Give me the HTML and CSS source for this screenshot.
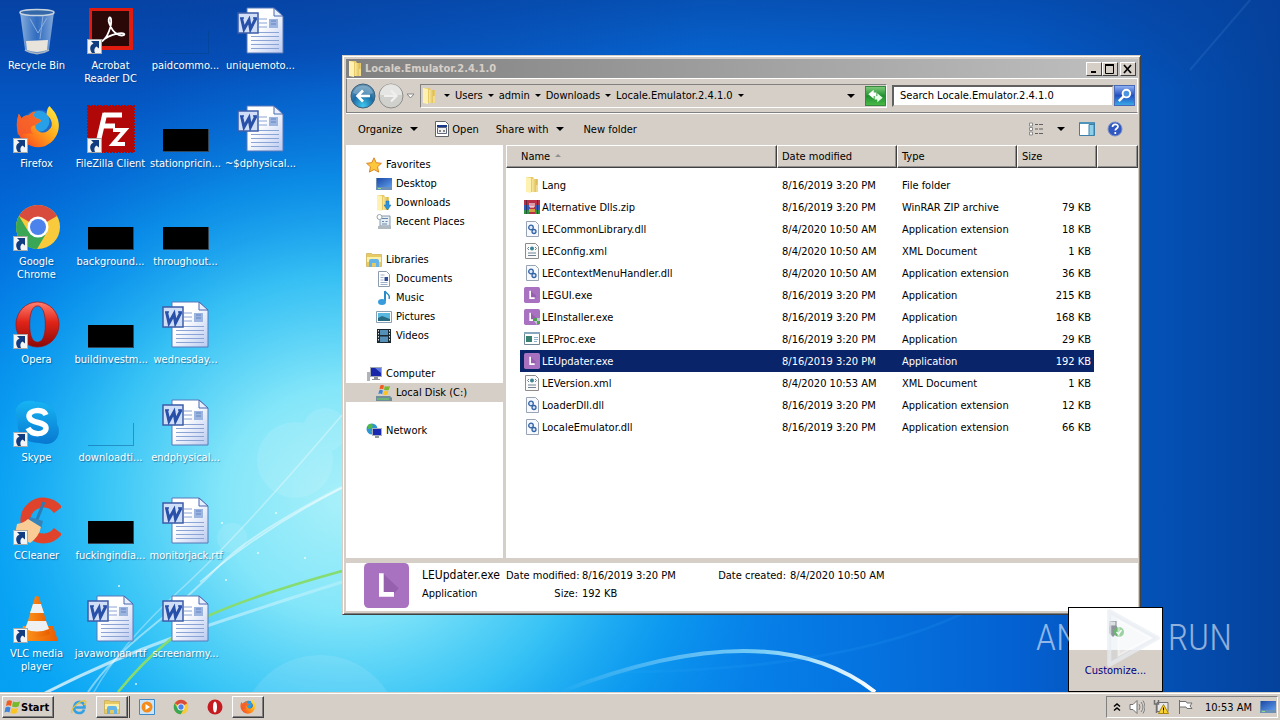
FILE: index.html
```html
<!DOCTYPE html>
<html lang="en">
<head>
<meta charset="utf-8">
<title>Desktop</title>
<link rel="stylesheet" href="styles.css">
</head>
<body>
<svg class="defs" aria-hidden="true">
  <defs>
    <linearGradient id="gPaper" x1="0" y1="0" x2="1" y2="1"><stop offset="0.4" stop-color="#fff"/><stop offset="1" stop-color="#b9c9f0"/></linearGradient>
    <linearGradient id="gFolder" x1="0" y1="0" x2="1" y2="0"><stop offset="0" stop-color="#f8e9a0"/><stop offset="1" stop-color="#dcb850"/></linearGradient>
    <linearGradient id="gFox" x1="1" y1="0" x2="0" y2="1"><stop offset="0" stop-color="#fff24a"/><stop offset="0.4" stop-color="#ffb21e"/><stop offset="0.75" stop-color="#ff6a1c"/><stop offset="1" stop-color="#e8203c"/></linearGradient>
    <linearGradient id="gOpera" x1="0" y1="0" x2="0" y2="1"><stop offset="0" stop-color="#ff8070"/><stop offset="0.45" stop-color="#e02418"/><stop offset="1" stop-color="#8c0808"/></linearGradient>
    <linearGradient id="gSkype" x1="0" y1="0" x2="0" y2="1"><stop offset="0" stop-color="#16b4f4"/><stop offset="1" stop-color="#0878d0"/></linearGradient>
    <linearGradient id="gCone" x1="0" y1="0" x2="1" y2="0"><stop offset="0" stop-color="#ff9a20"/><stop offset="1" stop-color="#e85c00"/></linearGradient>
    <linearGradient id="gBin" x1="0" y1="0" x2="1" y2="0"><stop offset="0" stop-color="#a4c4e8" stop-opacity=".85"/><stop offset="0.5" stop-color="#4c84cc" stop-opacity=".6"/><stop offset="1" stop-color="#9cbce4" stop-opacity=".85"/></linearGradient>
    <linearGradient id="gScreen" x1="0" y1="0" x2="1" y2="1"><stop offset="0" stop-color="#1c48a8"/><stop offset="1" stop-color="#5c9ce8"/></linearGradient>
    <radialGradient id="gBack" cx=".5" cy=".9" r=".9"><stop offset="0" stop-color="#40c8f0"/><stop offset="0.5" stop-color="#1c6ca4"/><stop offset="1" stop-color="#6898b8"/></radialGradient>
  </defs>
  <symbol id="arrow" viewBox="0 0 15 15"><rect x=".5" y=".5" width="14" height="14" fill="#f4f4f4" stroke="#a8a8a8"/><path d="M4 2h8v7.500L9.500 7.500C7 9 7 11.500 8 14H5C2 10 3 6 6.500 4.500z" fill="#123c80"/></symbol>
  <symbol id="word" viewBox="0 0 48 48">
    <path d="M10 1h27l9 8v37H10z" fill="url(#gPaper)" stroke="#5878b8"/><path d="M37 1v8h9z" fill="#e8f0ff" stroke="#4868b0"/>
    <path d="M22 12h8M22 16h8M22 20h8M14 25.500h28M14 29.500h28M14 33.500h28M14 37.500h28M14 41.500h28" stroke="#8ca4d4"/>
    <rect x="32" y="12" width="9" height="9" fill="#9cb4e0"/><path d="M34 14h5M34 17h5" stroke="#6484c0"/>
    <rect x="1" y="6" width="20" height="20" fill="#d0def8" stroke="#3c5ca8" stroke-width="1.500"/>
    <path d="M4.500 11l2.500 11 5-9 1.500 9L19 11" fill="none" stroke="#2850a8" stroke-width="3"/><path d="M3 11h4M16 11h4" stroke="#2850a8" stroke-width="1.500"/>
  </symbol>
  <symbol id="firefox" viewBox="0 0 48 48">
    <circle cx="25" cy="23" r="18" fill="#2468c8"/><circle cx="25" cy="17" r="11" fill="#28a0e8"/>
    <path d="M4 9l3 5c2-3 5-3 7-3 2-2 4-4 7-4-2 3-2 5 1 7 3 0 5 1 5 3l-6 4c0 6 7 10 13 6 7-4 5-12-1-17 0-4 1-7 3-9 3 4 6 6 8 12 5 12-1 25-13 30C19 47 6 40 3 28 1 21 2 15 4 9z" fill="url(#gFox)"/>
    <path d="M4 9l3 5c2-3 5-3 7-3 2-2 4-4 7-4-2 3-2 5 1 7 3 0 5 1 5 3l-6 4c-5 0-6 5-2 9-6-1-11 1-16 1C1 21 2 15 4 9z" fill="#f45a2c" opacity=".85"/>
  </symbol>
  <symbol id="chrome" viewBox="0 0 48 48">
    <circle cx="24" cy="24" r="22" fill="#f8ca3c"/><path d="M24 24L5 13A22 22 0 0 1 43 13z" fill="#d84c3e"/><path d="M5 13A22 22 0 0 0 23 46L33 29 24 24 14 28z" fill="#3aa757"/>
    <circle cx="24" cy="24" r="10.500" fill="#fff"/><circle cx="24" cy="24" r="8" fill="#4c82ec"/>
  </symbol>
  <symbol id="opera" viewBox="0 0 48 48"><path fill-rule="evenodd" d="M24 1a22 23 0 0 0 0 46 22 23 0 0 0 0-46zM24 5c5 0 8 7 8 19s-3 18-8 18-8-6-8-18 3-19 8-19z" fill="url(#gOpera)" stroke="#a01010" stroke-width=".7"/></symbol>
  <symbol id="folder" viewBox="0 0 16 16"><path d="M2 0h7l1 2h4v13H2z" fill="#e8ca68"/><path d="M2 0l5 1v15l-5-1z" fill="#fff2b0"/><path d="M8 2h5v13H8z" fill="url(#gFolder)"/><path d="M12 8h2v7h-2z" fill="#f0dc8c"/></symbol>
  <symbol id="le" viewBox="0 0 48 48"><rect width="48" height="48" rx="5" fill="#a972c0"/><path d="M20 11l17 16L31 34 20 31z" fill="#9760ae"/><path d="M16 11h5v20h11v5H16z" fill="#fff"/></symbol>
  <symbol id="dll" viewBox="0 0 16 16"><path d="M2.500.5h9l3 3v12h-12z" fill="#f6fafe" stroke="#98a4b4"/><circle cx="7" cy="6.500" r="2.300" fill="#dce8f8" stroke="#3464a4" stroke-width="1.300"/><circle cx="10" cy="10.500" r="2" fill="#dce8f8" stroke="#3464a4" stroke-width="1.300"/></symbol>
  <symbol id="xml" viewBox="0 0 16 16"><path d="M1.500.5h10l3 3v12h-13z" fill="#fafafa" stroke="#8c8c8c"/><circle cx="8" cy="5.500" r="2" fill="#3c8494"/><path d="M5 4L3.500 5.500 5 7M11 4l1.500 1.500L11 7M4 10h8M4 12.500h8" fill="none" stroke="#708090"/></symbol>
  <symbol id="winlogo" viewBox="0 0 16 16"><path d="M3 2c2-1 3-1 5 0L7 7C5 6 4 6 2 7z" fill="#f05c24"/><path d="M9 2.500c2 1 4 1 7 0l-1.500 5c-2 1-4 1-6.500 0z" fill="#78b82c"/><path d="M1.500 8.500c2-1 3-1 5 0l-1 5c-2-1-3-1-5 0z" fill="#3c84dc"/><path d="M7.500 9c2 1 4 1 6.500 0l-1.500 5c-2 1-4 1-6 0z" fill="#fcc420"/></symbol>
  <symbol id="lib" viewBox="0 0 16 16"><path d="M.5 1.500h5l1 1h9v12H.5z" fill="#e8ca64" stroke="#c8a440" stroke-width=".6"/><path d="M1 5h14v5H1z" fill="#fdf0a8"/><path d="M3 15V9q0-2 2-2h6q2 0 2 2v6h-3v-4H6v4z" fill="#64b4e8"/></symbol>
  <symbol id="monitor" viewBox="0 0 16 16"><path d="M0 2h16v12H0z" fill="#6c90b8"/><path d="M1 2h15v9H1z" fill="url(#gScreen)"/><path d="M2 12.500h3" stroke="#8cdc8c"/></symbol>
</svg>

<main class="desktop">
  <svg class="wallpaper" viewBox="0 0 1280 692" preserveAspectRatio="none" aria-hidden="true">
    <defs>
      <linearGradient id="w1" x1="0" y1="0" x2="0" y2="1"><stop offset="0" stop-color="#0646b0"/><stop offset=".4" stop-color="#0070e0"/><stop offset=".7" stop-color="#009cf4"/><stop offset="1" stop-color="#00a8f8"/></linearGradient>
      <linearGradient id="w2" x1="0" y1="0" x2="1" y2="0"><stop offset=".1" stop-color="#0860cc" stop-opacity="0"/><stop offset=".55" stop-color="#0878e8" stop-opacity=".75"/><stop offset=".8" stop-color="#0460d0"/><stop offset="1" stop-color="#04429c"/></linearGradient>
      <radialGradient id="w3" gradientUnits="userSpaceOnUse" cx="0" cy="0" r="1" gradientTransform="translate(345 500) scale(490 450)"><stop offset="0" stop-color="#a8f0fa"/><stop offset=".25" stop-color="#84e6f9"/><stop offset=".5" stop-color="#3cc8f6" stop-opacity=".9"/><stop offset=".72" stop-color="#10a4f2" stop-opacity=".6"/><stop offset="1" stop-color="#0878e0" stop-opacity="0"/></radialGradient>
      <linearGradient id="w4" x1="0" y1="0" x2="1" y2="0"><stop offset="0" stop-color="#fff" stop-opacity="0"/><stop offset=".6" stop-color="#9ce8fc" stop-opacity=".7"/><stop offset="1" stop-color="#fff"/></linearGradient>
      <linearGradient id="w5" x1="0" y1="0" x2="0" y2="1"><stop offset="0" stop-color="#06409c"/><stop offset="1" stop-color="#06409c" stop-opacity="0"/></linearGradient>
      <linearGradient id="w6" x1="0" y1="0" x2="1" y2="0"><stop offset="0" stop-color="#fff"/><stop offset="1" stop-color="#fff" stop-opacity=".3"/></linearGradient>
    </defs>
    <path d="M0 0h1280v692H0z" fill="url(#w1)"/><path d="M0 0h1280v692H0z" fill="url(#w2)"/><path d="M0 0h1280v692H0z" fill="url(#w3)"/>
    <path d="M0 0h1280v90H0z" fill="url(#w5)" opacity=".6"/>
    <g fill="#fff" opacity=".1"><circle cx="295" cy="460" r="38"/><circle cx="325" cy="430" r="22"/><circle cx="232" cy="538" r="15"/><circle cx="320" cy="735" r="80"/></g>
    <g fill="none">
      <path d="M45 693Q110 660 172 638T342 582" stroke="url(#w6)" stroke-width="3" opacity=".75"/>
      <path d="M88 692Q110 660 150 628T220 565T342 487" stroke="#fff" stroke-width="2" opacity=".45"/>
      <path d="M94 692Q120 645 180 590T342 415" stroke="#fff" stroke-width="1.500" opacity=".35"/>
      <path d="M200 582Q260 530 342 488" stroke="#fff" stroke-width="1.500" opacity=".5"/>
      <path d="M118 692Q165 635 210 615T342 571" stroke="#86dc70" stroke-width="2.500"/>
      <path d="M560 692Q770 610 875 692" stroke="url(#w4)" stroke-width="4"/>
      <path d="M970 610Q850 670 620 672" stroke="#30a8f8" stroke-width="3" opacity=".15"/>
      <path d="M1190 70L1250 0" stroke="#4c8cd8" stroke-width="2" opacity=".2"/>
    </g>
    <g fill="#fff" opacity=".8"><circle cx="222" cy="523" r="1"/><circle cx="276" cy="513" r="1"/><circle cx="226" cy="580" r="1"/><circle cx="258" cy="553" r="1"/><circle cx="305" cy="558" r="1"/><circle cx="136" cy="684" r="1"/><circle cx="119" cy="586" r="1"/></g>
  </svg>

  <section class="icons" aria-label="Desktop icons">
    <button class="shortcut"><svg class="pic" viewBox="0 0 48 48"><path d="M7 5l5 38q12 6 24 0l5-38z" fill="url(#gBin)"/><path d="M13 34l22-1-1 10q-10 4-20 0z" fill="#e8e4dc"/><path d="M17 12l8 14 9-15M30 8l-3 24" stroke="#88acdc" fill="none"/><ellipse cx="24" cy="5.500" rx="17" ry="3" fill="#3468a8" stroke="#c8d4e0" stroke-width="1.500"/><path d="M12 43q12 7 24 0" stroke="#a8b4c0" stroke-width="2" fill="none"/></svg><span>Recycle Bin</span></button>
    <button class="shortcut"><svg class="pic" viewBox="0 0 48 48"><use href="#firefox" width="46" height="46" x="2"/><use href="#arrow" x="0" y="33" width="15" height="15"/></svg><span>Firefox</span></button>
    <button class="shortcut"><svg class="pic" viewBox="0 0 48 48"><use href="#chrome" width="48" height="48" x="1" y="0"/><use href="#arrow" x="0" y="33" width="15" height="15"/></svg><span>Google Chrome</span></button>
    <button class="shortcut"><svg class="pic" viewBox="0 0 48 48"><use href="#opera" width="47" height="47" x="1"/><use href="#arrow" x="0" y="33" width="15" height="15"/></svg><span>Opera</span></button>
    <button class="shortcut"><svg class="pic" viewBox="0 0 48 48"><path d="M14 2q5-1 9 1c16 0 22 12 21 22 5 8 0 20-11 20-3 0-5-1-7-1C11 44 3 34 5 23-1 13 4 3 14 2z" fill="url(#gSkype)"/><path d="M33 16c-3-7-17-5-17 1 0 8 17 5 17 12 0 7-14 8-18 0" fill="none" stroke="#fff" stroke-width="5.500"/><use href="#arrow" x="0" y="33" width="15" height="15"/></svg><span>Skype</span></button>
    <button class="shortcut"><svg class="pic" viewBox="0 0 48 48"><path d="M45 13A18 18 0 1 0 45 34" fill="none" stroke="#e0432c" stroke-width="10"/><path d="M31 5L23 25" stroke="#287cb8" stroke-width="3"/><path d="M17 20l13 4-2 8-13-5z" fill="#3484bc"/><path d="M4 27q7-1 11-5l13 8q-2 10-11 16L2 37z" fill="#f8cc94"/><use href="#arrow" x="0" y="33" width="15" height="15"/></svg><span>CCleaner</span></button>
    <button class="shortcut"><svg class="pic" viewBox="0 0 48 48"><path d="M10 31h30l5 15H7z" fill="url(#gCone)"/><path d="M22 2q2-2 4 0l11 37q-13 6-26 0z" fill="url(#gCone)"/><path d="M20 9h8l3 9H17zM15 26h18l3 8q-12 5-24 0z" fill="#eef0f2"/><use href="#arrow" x="0" y="33" width="15" height="15"/></svg><span>VLC media player</span></button>

    <button class="shortcut"><svg class="pic" viewBox="0 0 48 48"><rect x="2" y="1" width="44" height="42" fill="#e01c10"/><rect x="5" y="4" width="37" height="35" fill="#2a0808"/><path d="M14 35C21 31 25 18 24 12c-1-4-4 0-1 6 3 8 10 12 14 10 3-3-13-3-23 7z" fill="none" stroke="#fff" stroke-width="1.800"/><use href="#arrow" x="0" y="32" width="15" height="15"/></svg><span>Acrobat Reader DC</span></button>
    <button class="shortcut"><svg class="pic" viewBox="0 0 48 48"><rect x="1" y="1" width="46" height="46" fill="#b00808" stroke="#b00808" stroke-width="2" stroke-dasharray="2 1"/><path d="M17 10h18M14 21h14M18 8l-7 30" stroke="#fff" stroke-width="5" fill="none"/><path d="M26 25h12L26 39h12" stroke="#fff" stroke-width="4" fill="none"/><use href="#arrow" x="0" y="33" width="15" height="15"/></svg><span>FileZilla Client</span></button>
    <button class="shortcut"><i class="thumb"></i><span>background...</span></button>
    <button class="shortcut"><i class="thumb"></i><span>buildinvestm...</span></button>
    <button class="shortcut"><i class="thumb clear"></i><span>downloadti...</span></button>
    <button class="shortcut"><i class="thumb"></i><span>fuckingindia...</span></button>
    <button class="shortcut"><svg class="pic"><use href="#word"/></svg><span>javawoman.rtf</span></button>

    <button class="shortcut"><i class="thumb clear"></i><span>paidcommo...</span></button>
    <button class="shortcut"><i class="thumb"></i><span>stationpricin...</span></button>
    <button class="shortcut"><i class="thumb"></i><span>throughout...</span></button>
    <button class="shortcut"><svg class="pic"><use href="#word"/></svg><span>wednesday...</span></button>
    <button class="shortcut"><svg class="pic"><use href="#word"/></svg><span>endphysical...</span></button>
    <button class="shortcut"><svg class="pic"><use href="#word"/></svg><span>monitorjack.rtf</span></button>
    <button class="shortcut"><svg class="pic"><use href="#word"/></svg><span>screenarmy...</span></button>

    <button class="shortcut"><svg class="pic"><use href="#word"/></svg><span>uniquemoto...</span></button>
    <button class="shortcut"><svg class="pic"><use href="#word"/></svg><span>~$dphysical...</span></button>
  </section>

  <section class="window" aria-label="Locale.Emulator.2.4.1.0">
    <header class="titlebar">
      <svg class="i16"><use href="#folder"/></svg>
      <h1>Locale.Emulator.2.4.1.0</h1>
      <button class="ctl" aria-label="Minimize"><svg viewBox="0 0 12 10"><path d="M3 8h5" stroke="#000" stroke-width="2"/></svg></button>
      <button class="ctl" aria-label="Maximize"><svg viewBox="0 0 12 10"><path d="M1.500 1v8.500h8V1M1 1h9" fill="none" stroke="#000"/><path d="M1 1h9" stroke="#000" stroke-width="2"/></svg></button>
      <button class="ctl last" aria-label="Close"><svg viewBox="0 0 12 10"><path d="M2 1l7 8M9 1L2 9" stroke="#000" stroke-width="1.700"/></svg></button>
    </header>

    <nav class="navbar">
      <button class="round" aria-label="Back"><svg viewBox="0 0 26 26"><circle cx="13" cy="13" r="12" fill="url(#gBack)" stroke="#406078"/><path d="M3 10a10.500 10.500 0 0 1 20 0q-10 5-20 0z" fill="#fff" opacity=".25"/><path d="M20 13H8M13 7.500L7.500 13l5.500 5.500" fill="none" stroke="#fff" stroke-width="2.600"/></svg></button>
      <button class="round" aria-label="Forward"><svg viewBox="0 0 26 26"><circle cx="13" cy="13" r="12" fill="#d0d0cc" stroke="#8c8c88"/><path d="M2 12a11 11 0 0 1 22 0z" fill="#eee" opacity=".7"/><path d="M6 13h12M13 7.500l5.500 5.500-5.500 5.500" fill="none" stroke="#f0f0f0" stroke-width="2.200"/></svg></button>
      <button class="history" aria-label="Recent pages"><svg viewBox="0 0 9 6"><path d="M1 1h7L4.500 5z" fill="#fff" stroke="#888"/></svg></button>
      <div class="address">
        <svg class="i16"><use href="#folder"/></svg>
        <div class="crumbs">
          <i class="caret s"></i><a href="#">Users</a><i class="caret s"></i><a href="#">admin</a><i class="caret s"></i><a href="#">Downloads</a><i class="caret s"></i><a href="#">Locale.Emulator.2.4.1.0</a><i class="caret s"></i>
        </div>
        <button class="plain drop" aria-label="Previous locations"><i class="caret"></i></button>
        <button class="refresh" aria-label="Refresh"><svg viewBox="0 0 20 20"><path d="M8 3L2 8l6 5v-3h3V6H8z" fill="#fff"/><path d="M12 17l6-5-6-5v3H9v4h3z" fill="#e8ffe8"/></svg></button>
      </div>
      <input class="search" type="text" aria-label="Search" value="Search Locale.Emulator.2.4.1.0">
      <button class="go" aria-label="Start search"><svg viewBox="0 0 20 20"><circle cx="12" cy="8" r="4" fill="#4c94e0" stroke="#fff" stroke-width="2"/><path d="M9 11l-5 5" stroke="#fff" stroke-width="2.500"/></svg></button>
    </nav>

    <div class="toolbar">
      <button class="plain organize">Organize<i class="caret"></i></button>
      <button class="plain open"><svg class="i16" viewBox="0 0 16 16"><path d="M1.500.5h10l3 3v12h-13z" fill="#fff" stroke="#606468"/><path d="M3 4h10v2H3z" fill="#18388c"/><path d="M3.500 6.500h9v6h-9z" fill="#f0f0f0" stroke="#606880"/><path d="M5 10h2M9 10h2" stroke="#222"/></svg>Open</button>
      <button class="plain share">Share with<i class="caret"></i></button>
      <button class="plain">New folder</button>
      <span class="grow"></span>
      <button class="plain view" aria-label="Change your view"><svg class="i16" viewBox="0 0 16 16"><path d="M1.500 2h3v3h-3zM1.500 6.500h3v3h-3zM1.500 11h3v3h-3z" fill="#fff" stroke="#8c8c8c"/><path d="M7 3.500h3M11 3.500h4M7 8h3M11 8h4M7 12.500h3M11 12.500h4" stroke="#606060"/></svg><i class="caret"></i></button>
      <button class="plain pane" aria-label="Show the preview pane"><svg class="i16" viewBox="0 0 16 16"><path d="M.5 1.500h15v13H.5z" fill="#fff" stroke="#3c80a8"/><path d="M1 1h14v2H1z" fill="#4c94b8"/><path d="M10 3.500h5v11h-5z" fill="#8cd0ec" stroke="#3c80a8"/></svg></button>
      <button class="plain" aria-label="Help"><svg class="i16" viewBox="0 0 16 16"><circle cx="8" cy="8" r="7" fill="#3058c0" stroke="#7890c8"/><path d="M5.500 6c0-3.500 5.500-3.500 5.500-.5C11 7.500 8.300 7.500 8.300 9.500M8.300 11v2" fill="none" stroke="#fff" stroke-width="1.700"/></svg></button>
    </div>

    <div class="body">
      <ul class="tree">
        <li><svg class="i16" viewBox="0 0 16 16"><path d="M8 .8l2.200 4.900 5.200.6-3.900 3.500 1.100 5.300L8 12.500l-4.600 2.600 1.100-5.300L.6 6.300l5.200-.6z" fill="#fcc83c" stroke="#dc8420"/></svg>Favorites</li>
        <li class="sub"><svg class="i16"><use href="#monitor"/></svg>Desktop</li>
        <li class="sub"><svg class="i16" viewBox="0 0 16 16"><use href="#folder" width="16" height="16" x="-1"/><path d="M10 6h3v4h2l-3.500 5L8 10h2z" fill="#2c94dc" stroke="#1468a8" stroke-width=".5"/></svg>Downloads</li>
        <li class="sub"><svg class="i16" viewBox="0 0 16 16"><path d="M4 2h10v10H4z" fill="#e4ecf4" stroke="#8898a8"/><path d="M6 4.500h6M6 7.500h2M9.500 7.500h2M6 10h5" stroke="#6888a8"/><path d="M2 12h13v3H2z" fill="#b0b8c0"/><circle cx="3.500" cy="3" r="2.500" fill="#fff" stroke="#98a4ac"/></svg>Recent Places</li>
        <li class="gap"><svg class="i16"><use href="#lib"/></svg>Libraries</li>
        <li class="sub"><svg class="i16" viewBox="0 0 16 16"><path d="M2.500.5h8l3 3v12h-11z" fill="#fff" stroke="#8c9cac"/><path d="M4.500 4h4M4.500 6.500h3M4.500 9h3M4.500 11.500h7M4.500 13.500h7" stroke="#a0b0c8"/><path d="M8.500 6h3.500v4H8.500z" fill="#304c94"/></svg>Documents</li>
        <li class="sub"><svg class="i16" viewBox="0 0 16 16"><path d="M9 1v10" stroke="#2c8cc8" stroke-width="2"/><path d="M9 1c1 3 6 3 4 8" fill="none" stroke="#2c8cc8" stroke-width="1.500"/><ellipse cx="6" cy="12" rx="4" ry="3" fill="#389cdc"/></svg>Music</li>
        <li class="sub"><svg class="i16" viewBox="0 0 16 16"><path d="M.5 2.500h15v11H.5z" fill="#fff" stroke="#88a0b0"/><path d="M2 4h12v8H2z" fill="#58b8e0"/><path d="M2 9l4-2 8 3v2H2z" fill="#286c84"/></svg>Pictures</li>
        <li class="sub"><svg class="i16" viewBox="0 0 16 16"><path d="M1 1h14v14H1z" fill="#1c2830"/><path d="M4 2h8v5H4zM4 8.500h8V14H4z" fill="#5490b8"/><path d="M2.500 2v12M13.500 2v12" stroke="#ddd" stroke-dasharray="1.500 1.500"/></svg>Videos</li>
        <li class="gap"><svg class="i16" viewBox="0 0 16 16"><path d="M1 6h3v9H1z" fill="#b0b4b8"/><path d="M4 1h12v10H4z" fill="#a0a8b4"/><path d="M5 2h10v8H5z" fill="#1828a8"/><path d="M9 2h6v5z" fill="#5c78e0"/><path d="M8 11h4v2H8zM6 13h8v1H6z" fill="#909498"/></svg>Computer</li>
        <li class="sub current"><svg class="i16" viewBox="0 0 16 16"><path d="M0 11h14l2 2v3H0z" fill="#708c98"/><path d="M1 14h12" stroke="#6cdc5c"/><use href="#winlogo" width="12" height="12" x="2" y="-1"/></svg>Local Disk (C:)</li>
        <li class="gap"><svg class="i16" viewBox="0 0 16 16"><circle cx="6" cy="6" r="5.500" fill="#2c94d8"/><path d="M2 2q4-3 5 1-1 3-5 3zM4 8h4v3z" fill="#50b84c"/><path d="M6 5h10v8H6z" fill="#a8b0c0"/><path d="M7 6h8v6H7z" fill="#1828b0"/><path d="M9 13h4v2H9z" fill="#90989c"/></svg>Network</li>
      </ul>
      <div class="list">
        <table>
          <colgroup><col class="c-name"><col class="c-date"><col class="c-type"><col class="c-size"><col></colgroup>
          <thead><tr><th class="n">Name<i class="sort"></i></th><th>Date modified</th><th>Type</th><th>Size</th><th></th></tr></thead>
          <tbody>
            <tr><td><svg class="i16"><use href="#folder"/></svg>Lang</td><td>8/16/2019 3:20 PM</td><td>File folder</td><td></td></tr>
            <tr><td><svg class="i16" viewBox="0 0 16 16"><path d="M0 1h16v5H0z" fill="#b83048"/><path d="M0 6h16v5H0z" fill="#3458b8"/><path d="M0 11h16v4H0z" fill="#2c9440"/><path d="M5 1h6v14H5z" fill="#b83048"/><path d="M2.500 1v14M13.500 1v14" stroke="#182030" opacity=".5"/><path d="M6 4v4h4V4M8 4v4" fill="none" stroke="#fff"/><path d="M5 10h6v3H5z" fill="#d89c40"/></svg>Alternative Dlls.zip</td><td>8/16/2019 3:20 PM</td><td>WinRAR ZIP archive</td><td>79 KB</td></tr>
            <tr><td><svg class="i16"><use href="#dll"/></svg>LECommonLibrary.dll</td><td>8/4/2020 10:50 AM</td><td>Application extension</td><td>18 KB</td></tr>
            <tr><td><svg class="i16"><use href="#xml"/></svg>LEConfig.xml</td><td>8/4/2020 10:50 AM</td><td>XML Document</td><td>1 KB</td></tr>
            <tr><td><svg class="i16"><use href="#dll"/></svg>LEContextMenuHandler.dll</td><td>8/4/2020 10:50 AM</td><td>Application extension</td><td>36 KB</td></tr>
            <tr><td><svg class="i16"><use href="#le"/></svg>LEGUI.exe</td><td>8/16/2019 3:20 PM</td><td>Application</td><td>215 KB</td></tr>
            <tr><td><svg class="i16" viewBox="0 0 16 16"><use href="#le" width="16" height="16"/><path d="M9 9h4v3H9zM13 12h3v3h-3z" fill="#50a050"/><path d="M13 9h3v3h-3zM10 12h3v4z" fill="#c0c8d8"/></svg>LEInstaller.exe</td><td>8/16/2019 3:20 PM</td><td>Application</td><td>168 KB</td></tr>
            <tr><td><svg class="i16" viewBox="0 0 16 16"><path d="M.5 1.500h15v12H.5z" fill="#fff" stroke="#708898"/><path d="M0 1h16v2H0z" fill="#88a8c0"/><path d="M2 5h6v6H2z" fill="#388070"/><path d="M10 6.500h4M10 8.500h4M10 10.500h3" stroke="#90b0d0"/></svg>LEProc.exe</td><td>8/16/2019 3:20 PM</td><td>Application</td><td>29 KB</td></tr>
            <tr class="selected"><td><svg class="i16"><use href="#le"/></svg>LEUpdater.exe</td><td>8/16/2019 3:20 PM</td><td>Application</td><td>192 KB</td></tr>
            <tr><td><svg class="i16"><use href="#xml"/></svg>LEVersion.xml</td><td>8/4/2020 10:53 AM</td><td>XML Document</td><td>1 KB</td></tr>
            <tr><td><svg class="i16"><use href="#dll"/></svg>LoaderDll.dll</td><td>8/16/2019 3:20 PM</td><td>Application extension</td><td>12 KB</td></tr>
            <tr><td><svg class="i16"><use href="#dll"/></svg>LocaleEmulator.dll</td><td>8/16/2019 3:20 PM</td><td>Application extension</td><td>66 KB</td></tr>
          </tbody>
        </table>
      </div>
    </div>

    <footer class="details">
      <svg class="big"><use href="#le"/></svg>
      <div class="facts">
        <strong>LEUpdater.exe</strong><span class="k">Date modified:</span><span>8/16/2019 3:20 PM</span><span class="k">Date created:</span><span>8/4/2020 10:50 AM</span>
        <span>Application</span><span class="k">Size:</span><span>192 KB</span>
      </div>
    </footer>
  </section>

  <aside class="flyout">
    <div class="flyout-icons"><svg class="i16" viewBox="0 0 16 16"><path d="M2 0h6v5H2z" fill="#e0e0e0" stroke="#60656a"/><path d="M1 5h8v7l-4 4-4-4z" fill="#70757a"/><circle cx="11" cy="11" r="5" fill="#38a838"/><path d="M8.500 11l2 2 3-4" fill="none" stroke="#fff" stroke-width="1.500"/></svg></div>
    <a href="#">Customize...</a>
  </aside>
  <div class="watermark"><span>ANY</span><svg viewBox="0 0 54 58"><path d="M4 3v52l47-26z" fill="#d8e0ea" fill-opacity=".3" stroke="#e8ecf2" stroke-opacity=".7" stroke-width="4" stroke-linejoin="round"/><path d="M13 12v34l31-17z" fill="#fff" fill-opacity=".35" stroke="#fff" stroke-opacity=".5" stroke-width="2"/></svg><span>RUN</span></div>
</main>

<footer class="taskbar">
  <button class="start"><svg class="i16"><use href="#winlogo"/></svg>Start</button>
  <div class="pins">
    <button class="pin" aria-label="Internet Explorer"><svg class="i16" viewBox="0 0 16 16"><path d="M3 8.500h10.500c0-7.500-10-7.500-10.500 0 0 7 9 7 10 2" fill="none" stroke="#34a0e4" stroke-width="2.600"/><path d="M1 14C-1 10 9 1 14 2c2 1 0 3-1 4" fill="none" stroke="#e8c430" stroke-width="1.300"/></svg></button>
    <button class="pin up stack" aria-label="Windows Explorer"><svg class="i16"><use href="#lib"/></svg></button>
    <button class="pin" aria-label="Media Player"><svg class="i16" viewBox="0 0 16 16"><path d="M.5.5h15v15H.5z" fill="#cce4f8" stroke="#3c8ccc"/><circle cx="8" cy="8" r="5.500" fill="#f48c1c"/><path d="M6.500 5v6l4.500-3z" fill="#fff"/></svg></button>
    <button class="pin" aria-label="Google Chrome"><svg class="i16"><use href="#chrome"/></svg></button>
    <button class="pin" aria-label="Opera"><svg class="i16" viewBox="0 0 16 16"><circle cx="8" cy="8" r="7.500" fill="#c41c20"/><ellipse cx="8" cy="8" rx="2" ry="5.500" fill="#fff"/></svg></button>
    <button class="pin up" aria-label="Firefox"><svg class="i16"><use href="#firefox"/></svg></button>
  </div>
  <div class="tray">
    <button class="plain chev" aria-label="Show hidden icons"><svg viewBox="0 0 8 10"><path d="M1 4.500L4 2l3 2.500M1 8.500L4 6l3 2.500" fill="none" stroke="#000" stroke-width="1.500"/></svg></button>
    <svg class="i16" viewBox="0 0 16 16"><path d="M1 5.500h3l4-4v13l-4-4H1z" fill="#fff" stroke="#707070"/><path d="M10 5q2 3 0 6M12 3q4 5 0 10M14 1.500q4 6.500 0 13" fill="none" stroke="#808080"/></svg>
    <svg class="i16" viewBox="0 0 16 16"><path d="M4 3.500h11v9H4z" fill="#e8e8e8" stroke="#707070"/><path d="M1.500 1v4h4V1M3.500 5v9" fill="none" stroke="#707070" stroke-width="1.500"/><path d="M10.500 5.500l5 9h-10z" fill="#fcd430" stroke="#a88410"/><path d="M10.500 8.500v3M10.500 12.500v1" stroke="#000"/></svg>
    <svg class="i16" viewBox="0 0 16 16"><path d="M2.500 1v14M3 2.500h6l1 1.500h5l-2 3 2 2.500h-5L9 8H3" fill="#fff" stroke="#707070"/></svg>
    <time>10:53 AM</time>
    <button class="plain" aria-label="Show desktop"><svg class="i16"><use href="#monitor"/></svg></button>
  </div>
</footer>
</body>
</html>
```
FILE: styles.css
```css
* { box-sizing: border-box; }
body {
  margin: 0;
  height: 100vh;
  display: flex;
  flex-direction: column;
  overflow: hidden;
  font: 11px/13px "DejaVu Sans Condensed", "DejaVu Sans", sans-serif;
  color: #000;
}
button, input { font: inherit; color: inherit; }
button { border: 0; padding: 0; background: none; }
a { color: inherit; text-decoration: none; }
svg { display: block; flex: none; }
.defs { position: absolute; width: 0; height: 0; }
.i16 { width: 16px; height: 16px; }
.plain { display: flex; align-items: center; }
.grow { flex: 1; }
.caret { flex: none; border: 4px solid transparent; border-top-color: #000; border-bottom: 0; }
.caret.s { border-width: 3px; border-bottom: 0; }

/* desktop */
.desktop { position: relative; flex: 1; min-height: 0; background: #0868dc; }
.wallpaper { position: absolute; top: 0; left: 0; width: 100%; height: 100%; }
.icons {
  position: relative;
  display: grid;
  grid-auto-flow: column;
  grid-template-rows: repeat(7, 98px);
  grid-template-columns: 73px;
  grid-auto-columns: 75px;
  justify-content: start;
  padding-top: 7px;
}
.shortcut { display: flex; flex-direction: column; align-items: center; gap: 4px; color: #fff; min-width: 0; }
.shortcut span { max-width: 72px; text-shadow: 1px 1px 1px #00306080; }
.pic { width: 48px; height: 48px; }
.thumb { width: 46px; height: 23px; margin: 24px 0 1px; background: #000; border-right: 1px solid #345; border-bottom: 1px solid #345; }
.thumb.clear { background: none; border-color: #00408066; }

/* explorer window */
.window {
  position: absolute;
  left: 342px;
  top: 55px;
  width: 799px;
  height: 560px;
  display: flex;
  flex-direction: column;
  padding: 3px 2px 3px 3px;
  background: #d6cfc7;
  border: 1px solid;
  border-color: #d6cfc7 #404040 #404040 #d6cfc7;
  box-shadow: inset 1px 1px #fff, inset -1px -1px #808080;
}
.titlebar { display: flex; align-items: center; height: 19px; padding: 0 2px 0 1px; background: linear-gradient(90deg, #808080, #c0c0c0); }
.titlebar h1 { flex: 1; margin: 0 0 0 2px; font-size: 11px; line-height: 13px; color: #d6cfc7; }
.ctl { width: 16px; height: 14px; padding: 1px; background: #d6cfc7; border: 1px solid; border-color: #fff #404040 #404040 #fff; }
.ctl.last { margin-left: 2px; }
.ctl svg { width: 12px; height: 10px; }
.navbar {
  display: flex;
  align-items: center;
  height: 35px;
  padding: 0 2px 0 3px;
  border: 1px solid #808080;
  border-top-color: #fff;
  border-right-color: #fff;
  box-shadow: 0 1px #fff;
}
.round svg { width: 26px; height: 26px; }
.round + .round { margin-left: 2px; }
.history { margin-left: 2px; }
.history svg { width: 9px; height: 6px; }
.address { display: flex; align-items: center; flex: 1; height: 24px; margin: 0 5px 0 5px; border: 1px solid; border-color: #808080 #fff #fff #808080; }
.crumbs { display: flex; align-items: center; gap: 5px; flex: 1; margin-left: 7px; }
.drop { margin-right: 10px; }
.refresh { width: 21px; height: 20px; background: linear-gradient(#7cc878, #209030 50%, #48b848); border: 1px solid #388840; }
.refresh svg, .go svg { width: 100%; height: 100%; }
.search { width: 222px; height: 22px; padding: 0 6px; background: #fff; border: 2px solid; border-color: #606060 #d6cfc7 #d6cfc7 #606060; }
.go { width: 21px; height: 21px; background: linear-gradient(#90b0f0, #2450c0 50%, #38a8e8); border: 1px solid #4868b8; }
.toolbar { display: flex; align-items: center; height: 32px; padding: 0 15px 0 12px; }
.organize, .share { gap: 8px; }
.organize { margin-right: 16px; }
.open { gap: 2px; margin-right: 17px; }
.share { margin-right: 19px; }
.view { gap: 13px; margin-right: 14px; }
.pane { margin-right: 12px; }
.body { display: flex; flex: 1; min-height: 0; border-bottom: 5px solid #d6cfc7; }
.tree { width: 157px; margin: 0; padding: 10px 0 0; list-style: none; background: #fff; flex: none; }
.tree li { display: flex; align-items: center; gap: 4px; height: 19px; padding-left: 20px; }
.tree .sub { padding-left: 30px; }
.tree .gap { margin-top: 19px; }
.tree .current { background: #d6cfc7; }
.list { flex: 1; min-width: 0; margin-left: 3px; background: #fff; }
table { width: 100%; table-layout: fixed; border-spacing: 0; }
.c-name { width: 271px; }
.c-date, .c-type { width: 120px; }
.c-size { width: 80px; }
th { height: 23px; padding: 0 4px; font-weight: normal; text-align: left; background: #d6cfc7; border: 1px solid; border-color: #fff #404040 #404040 #fff; box-shadow: inset -1px -1px #909090; }
th.n { padding-left: 14px; }
.sort { display: inline-block; margin: 0 0 3px 5px; border: 3px solid transparent; border-bottom-color: #909090; border-top: 0; }
tbody::before { content: ""; display: block; height: 6px; }
td { height: 22px; padding: 0 5px; white-space: nowrap; background-clip: padding-box; }
td:first-child { display: flex; align-items: center; gap: 2px; padding-left: 4px; border-left: 14px solid transparent; }
td:nth-child(4) { text-align: right; padding-right: 3px; border-right: 3px solid transparent; }
.selected td { background-color: #0a246a; color: #fff; }
.details { display: flex; height: 48px; padding-left: 18px; background: #fff; }
.big { width: 45px; height: 45px; }
.facts { display: grid; grid-template-columns: 80px 72px 132px 68px auto; grid-auto-rows: 18px; align-items: center; align-content: start; column-gap: 4px; margin: 3px 0 0 13px; white-space: nowrap; }
.facts strong { font-size: 12px; font-weight: normal; }
.k { text-align: right; }

/* notification flyout */
.flyout { position: absolute; right: 117px; bottom: 0; width: 95px; height: 85px; display: flex; flex-direction: column; background: #d6cfc7; border: 1px solid #000; color: #000080; text-align: center; }
.flyout-icons { display: flex; justify-content: center; align-items: center; height: 42px; background: #fff; }
.flyout a { margin: auto; }
.watermark { position: absolute; right: 48px; bottom: 24px; display: flex; align-items: center; gap: 6px; color: #ffffff90; font: 300 37px/58px "Roboto Condensed", "Liberation Sans Narrow", sans-serif; pointer-events: none; }
.watermark svg { width: 58px; height: 60px; }

/* taskbar */
.taskbar { display: flex; align-items: center; height: 28px; flex: none; padding: 2px 2px 0; background: #d6cfc7; box-shadow: inset 0 1px #d6cfc7, inset 0 2px #fff; }
.start, .up { border: 1px solid; border-color: #fff #404040 #404040 #fff; box-shadow: inset -1px -1px #808080; }
.start { display: flex; align-items: center; gap: 1px; width: 52px; height: 22px; padding-left: 1px; font-weight: bold; }
.pins { display: flex; flex: 1; margin-left: 8px; }
.pin { display: flex; justify-content: center; align-items: center; width: 34px; height: 22px; }
.up { width: 32px; }
.stack { margin-right: 2px; box-shadow: inset -1px -1px #808080, 1px 0 #d6cfc7, 2px 0 #404040; }
.tray { display: flex; align-items: center; gap: 8px; height: 22px; padding: 0 1px 0 6px; border: 1px solid; border-color: #808080 #fff #fff #808080; }
.chev svg { width: 8px; height: 10px; }
.tray time { margin-left: 4px; }
```
